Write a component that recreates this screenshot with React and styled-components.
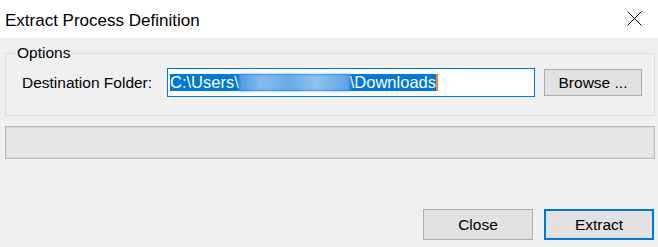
import styled, { createGlobalStyle } from "styled-components";

const GlobalStyle = createGlobalStyle`
  html, body {
    margin: 0;
    padding: 0;
    background: #f0f0f0;
  }
  * {
    box-sizing: border-box;
  }
`;

const Window = styled.div`
  width: 658px;
  height: 247px;
  display: flex;
  flex-direction: column;
  font-family: "Liberation Sans", Arial, sans-serif;
  color: #000;
  overflow: hidden;
`;

const TitleBar = styled.div`
  height: 38px;
  flex-shrink: 0;
  background: #fff;
  display: flex;
  justify-content: space-between;
  padding: 3px 16px 0 5px;
`;

const Title = styled.div`
  font-size: 17px;
  line-height: 35px;
`;

const CloseIcon = styled.svg`
  margin-top: 8px;
  width: 15px;
  height: 15px;
`;

const Body = styled.div`
  flex: 1;
  background: #f0f0f0;
  display: flex;
  flex-direction: column;
  padding: 7px 3px 7px 5px;
`;

const GroupBox = styled.fieldset`
  margin: 0;
  padding: 7px 12px 18px 16px;
  border: 1px solid #dcdcdc;
  min-width: 0;
`;

const Legend = styled.legend`
  margin-left: -7px;
  padding: 0 2px;
  font-size: 15.5px;
  line-height: 16px;
`;

const Row = styled.div`
  display: flex;
  align-items: center;
  height: 29px;
`;

const Label = styled.div`
  width: 145px;
  font-size: 15.5px;
`;

const TextBox = styled.div`
  width: 368px;
  height: 29px;
  background: #fff;
  border: 1px solid #0078d7;
  padding: 0 2px;
  display: flex;
  align-items: center;
  font-size: 16.5px;
  white-space: nowrap;
`;

const Selection = styled.span`
  display: inline-flex;
  align-items: center;
  height: 17px;
  background: #0078d7;
  color: #fff;
`;

const Blurred = styled.span`
  display: inline-block;
  width: 111px;
  height: 17px;
  background: linear-gradient(
    90deg,
    #4f9be3 0%,
    #86bcec 20%,
    #6aaae8 45%,
    #8fc2ee 70%,
    #5aa1e4 100%
  );
  filter: blur(1.5px);
`;

const Caret = styled.span`
  display: inline-block;
  width: 2px;
  height: 17px;
  background: #e8873a;
`;

const Button = styled.button`
  font-family: inherit;
  font-size: 15.5px;
  color: #000;
  background: #e1e1e1;
  border: ${(p) => (p.$primary ? "2px solid #0078d7" : "1px solid #adadad")};
  border-radius: 0;
  padding: 0;
  width: ${(p) => p.$width}px;
  height: ${(p) => p.$height}px;
  flex-shrink: 0;
`;

const BrowseButton = styled(Button)`
  margin-left: 9px;
`;

const ProgressBar = styled.div`
  margin-top: 10px;
  height: 33px;
  background: #e6e6e6;
  border: 1px solid #bcbcbc;
  box-shadow: inset 0 0 0 1px #dadada;
`;

const Footer = styled.div`
  margin-top: auto;
  display: flex;
  justify-content: flex-end;
  gap: 11px;
  padding-right: 1px;
`;

export default function App() {
  return (
    <>
      <GlobalStyle />
      <Window>
        <TitleBar>
          <Title>Extract Process Definition</Title>
          <CloseIcon viewBox="0 0 15 15">
            <path d="M0.5 0.5 L14.5 14.5 M14.5 0.5 L0.5 14.5" stroke="#000" strokeWidth="1" fill="none" />
          </CloseIcon>
        </TitleBar>
        <Body>
          <GroupBox>
            <Legend>Options</Legend>
            <Row>
              <Label>Destination Folder:</Label>
              <TextBox>
                <Selection>
                  C:\Users\
                  <Blurred />
                  \Downloads
                </Selection>
                <Caret />
              </TextBox>
              <BrowseButton $width={98} $height={27}>
                Browse ...
              </BrowseButton>
            </Row>
          </GroupBox>
          <ProgressBar />
          <Footer>
            <Button $width={110} $height={31}>
              Close
            </Button>
            <Button $primary $width={110} $height={31}>
              Extract
            </Button>
          </Footer>
        </Body>
      </Window>
    </>
  );
}
